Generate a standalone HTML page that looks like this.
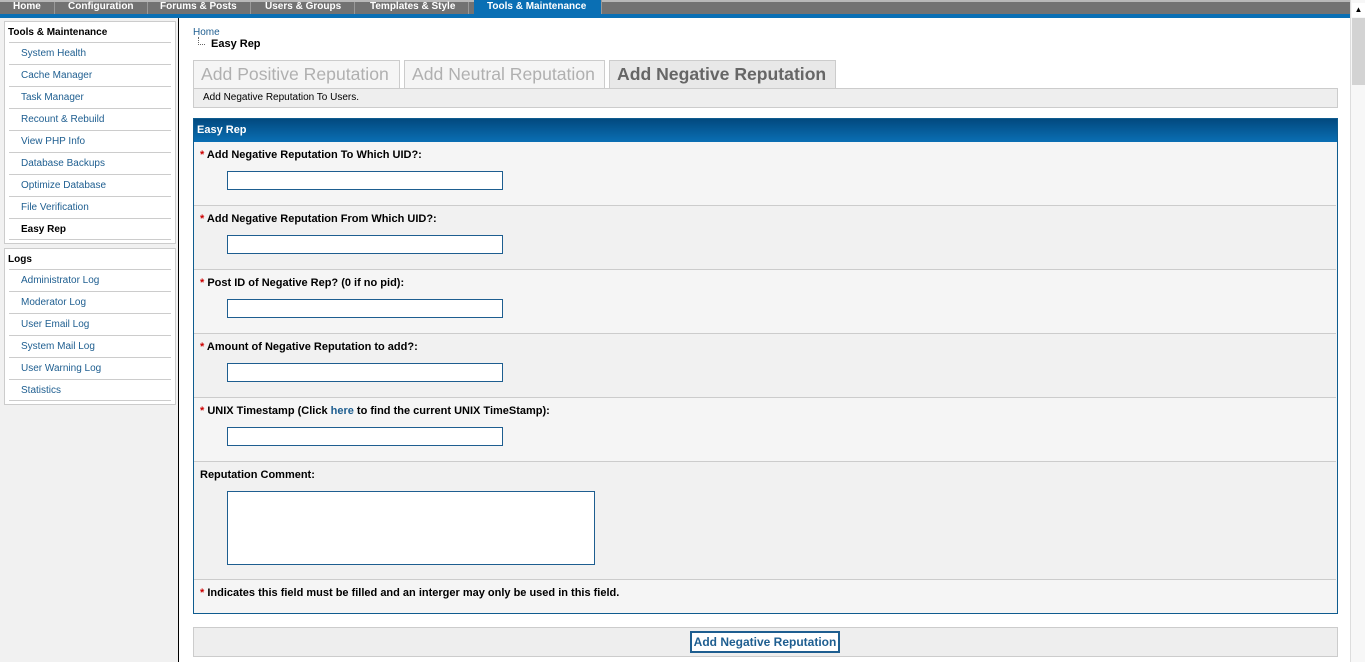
<!DOCTYPE html>
<html><head><meta charset="utf-8"><style>
*{box-sizing:border-box;margin:0;padding:0}
body{width:1365px;height:662px;overflow:hidden;font-family:"Liberation Sans",sans-serif;background:#fff;position:relative}
.a{position:absolute}
#top{left:0;top:0;width:1350px;height:14px;background:#727272;border-top:2px solid #b8b8b8}
#blue{left:0;top:14px;width:1350px;height:4px;background:#0a6fb4}
.nav{top:2px;height:12px;font-size:10px;font-weight:bold;color:#fff;line-height:9px;padding:0 13px;border-right:1px solid #999}
#side{left:0;top:18px;width:179px;height:644px;background:#f1f1f1;border-right:1px solid #000}
.box{left:4px;width:172px;background:#fff;border:1px solid #ccc}
.box h4{font-size:10px;font-weight:bold;color:#000;padding:4px 3px 2px;height:20px;line-height:14px}
.box div{margin:0 4px;border-top:1px solid #ccc;height:22px;line-height:21px;font-size:10px;color:#1e5e90;padding-left:12px}
.box div.b{color:#000;font-weight:bold}
.tab{top:60px;height:28px;border:1px solid #ccc;border-bottom:none;background:#f5f5f5;color:#b0b0b0;font-size:17.6px;line-height:26px;padding:0 7px;white-space:nowrap}
.row{left:194px;width:1142px;height:64px;border-top:1px solid #ccc;font-size:11px;font-weight:bold;color:#000;padding:7px 6px}
.row i{color:#c00;font-style:normal}
.inp{position:absolute;left:33px;top:29px;width:276px;height:19px;border:1px solid #1e5e90;background:#fff}
#scroll{left:1350px;top:0;width:15px;height:662px;background:#f7f7f7;border-left:1px solid #ddd}
</style></head><body>
<div class="a" id="top"></div><div class="a" id="blue"></div>
<div class="a nav" style="left:0">Home</div>
<div class="a nav" style="left:55px">Configuration</div>
<div class="a nav" style="left:147px">Forums &amp; Posts</div>
<div class="a nav" style="left:252px">Users &amp; Groups</div>
<div class="a nav" style="left:357px">Templates &amp; Style</div>
<div class="a nav" style="left:474px;width:128px;background:#0a6fb4;height:14px;top:0;line-height:13px;padding-top:0">Tools &amp; Maintenance</div>
<div class="a" id="side">
<div class="a box" style="top:3px;height:223px"><h4>Tools &amp; Maintenance</h4>
<div>System Health</div><div>Cache Manager</div><div>Task Manager</div><div>Recount &amp; Rebuild</div><div>View PHP Info</div><div>Database Backups</div><div>Optimize Database</div><div>File Verification</div><div class="b" style="border-bottom:1px solid #ccc">Easy Rep</div></div>
<div class="a box" style="top:230px;height:157px"><h4>Logs</h4>
<div>Administrator Log</div><div>Moderator Log</div><div>User Email Log</div><div>System Mail Log</div><div>User Warning Log</div><div style="border-bottom:1px solid #ccc">Statistics</div></div>
</div>
<div class="a" style="left:193px;top:27px;font-size:10px;color:#1e5e90">Home</div>
<div class="a" style="left:198px;top:37px;width:7px;height:8px;border-left:1px dotted #666;border-bottom:1px dotted #666"></div>
<div class="a" style="left:211px;top:38px;font-size:11px;color:#000;font-weight:bold">Easy Rep</div>
<div class="a tab" style="left:193px;width:207px">Add Positive Reputation</div>
<div class="a tab" style="left:404px;width:201px">Add Neutral Reputation</div>
<div class="a tab" style="left:609px;width:227px;background:#e8e8e8;color:#666;font-weight:bold;height:28px">Add Negative Reputation</div>
<div class="a" style="left:193px;top:88px;width:1145px;height:20px;background:#eee;border:1px solid #ccc;font-size:10px;line-height:18px;padding-left:9px">Add Negative Reputation To Users.</div>
<div class="a" style="left:193px;top:118px;width:1145px;height:496px;border:1px solid #0f5c8f;background:#f3f3f3"></div>
<div class="a" style="left:194px;top:119px;width:1143px;height:23px;background:linear-gradient(#02497f,#0a6fb4);color:#fff;font-size:11px;font-weight:bold;line-height:22px;padding-left:3px">Easy Rep</div>
<div class="a row" style="top:142px;height:63px;background:#f5f5f5;border-top:none"><i>*</i> Add Negative Reputation To Which UID?:<span class="inp"></span></div>
<div class="a row" style="top:205px;background:#f1f1f1"><i>*</i> Add Negative Reputation From Which UID?:<span class="inp"></span></div>
<div class="a row" style="top:269px;background:#f5f5f5"><i>*</i> Post ID of Negative Rep? (0 if no pid):<span class="inp"></span></div>
<div class="a row" style="top:333px;background:#f1f1f1"><i>*</i> Amount of Negative Reputation to add?:<span class="inp"></span></div>
<div class="a row" style="top:397px;background:#f5f5f5"><i>*</i> UNIX Timestamp (Click <span style="color:#1e5e90">here</span> to find the current UNIX TimeStamp):<span class="inp"></span></div>
<div class="a row" style="top:461px;height:118px;background:#f1f1f1">Reputation Comment:<span class="inp" style="height:74px;width:368px"></span></div>
<div class="a row" style="top:579px;height:34px;background:#f5f5f5"><i>*</i> Indicates this field must be filled and an interger may only be used in this field.</div>
<div class="a" style="left:193px;top:627px;width:1145px;height:30px;background:#eee;border:1px solid #ccc"></div>
<div class="a" style="left:690px;top:631px;width:150px;height:22px;border:2px solid #1e5e90;background:#fff;color:#1e5e90;font-size:12px;font-weight:bold;text-align:center;line-height:18px">Add Negative Reputation</div>
<div class="a" id="scroll"><div class="a" style="left:1px;top:3px;width:13px;height:14px;background:#fff;font-size:8px;text-align:center;line-height:14px">▲</div><div class="a" style="left:1px;top:18px;width:13px;height:67px;background:#d3d3d3"></div></div>
</body></html>
